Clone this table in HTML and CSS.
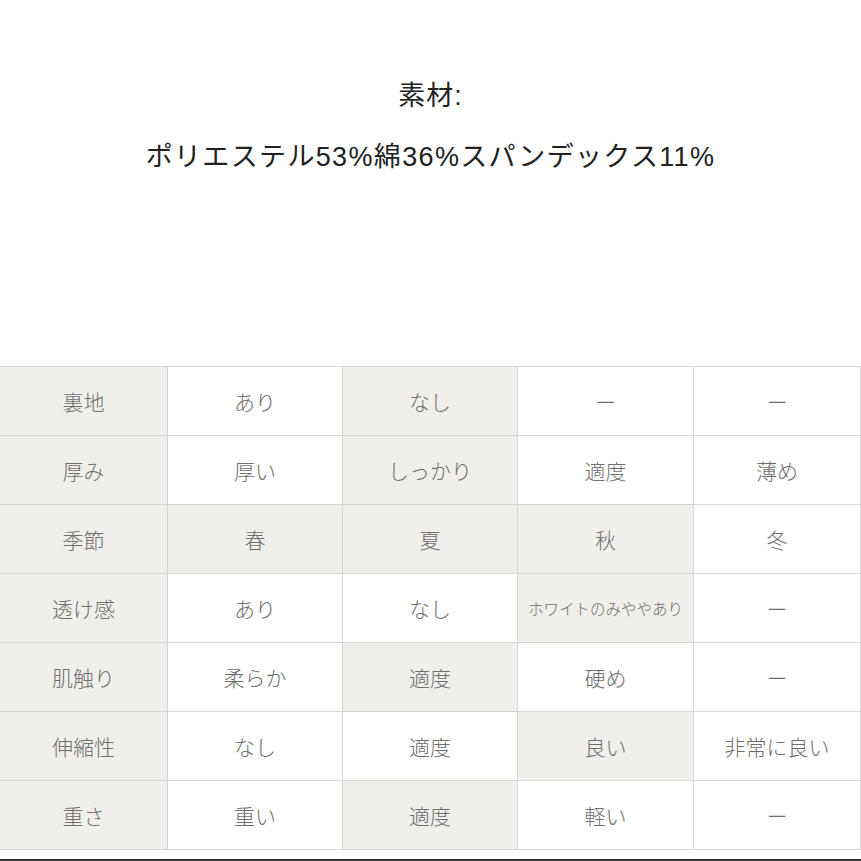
FILE: index.html
```html
<!DOCTYPE html>
<html lang="ja">
<head>
<meta charset="utf-8">
<link rel="stylesheet" href="styles.css">
</head>
<body>
<div class="page">
  <div class="header">
    <div class="t1">素材:</div>
    <div class="t2">ポリエステル53%綿36%スパンデックス11%</div>
  </div>
  <div class="table">
    <div class="c h">裏地</div><div class="c">あり</div><div class="c h">なし</div><div class="c">ー</div><div class="c">ー</div>
    <div class="c h">厚み</div><div class="c">厚い</div><div class="c h">しっかり</div><div class="c">適度</div><div class="c">薄め</div>
    <div class="c h">季節</div><div class="c h">春</div><div class="c h">夏</div><div class="c h">秋</div><div class="c">冬</div>
    <div class="c h">透け感</div><div class="c">あり</div><div class="c">なし</div><div class="c h small">ホワイトのみややあり</div><div class="c">ー</div>
    <div class="c h">肌触り</div><div class="c">柔らか</div><div class="c h">適度</div><div class="c">硬め</div><div class="c">ー</div>
    <div class="c h">伸縮性</div><div class="c">なし</div><div class="c">適度</div><div class="c h">良い</div><div class="c">非常に良い</div>
    <div class="c h">重さ</div><div class="c">重い</div><div class="c h">適度</div><div class="c">軽い</div><div class="c">ー</div>
  </div>
  <div class="spacer"></div>
  <div class="bottombar"></div>
</div>
</body>
</html>
```
FILE: styles.css
```css
html, body {
  margin: 0;
  padding: 0;
  background: #ffffff;
}
body {
  font-family: "Noto Sans CJK JP", "Noto Sans", sans-serif;
}
.page {
  width: 861px;
  height: 861px;
  display: flex;
  flex-direction: column;
  overflow: hidden;
}
.header {
  padding-top: 78px;
  text-align: center;
  color: #222;
  font-family: "Liberation Sans", "Noto Sans CJK JP", sans-serif;
}
.t1 {
  font-size: 27px;
  line-height: 36px;
  letter-spacing: 1px;
}
.t2 {
  margin-top: 25px;
  font-size: 27px;
  line-height: 36px;
  letter-spacing: 1.35px;
}
.table {
  margin-top: 191px;
  display: grid;
  grid-template-columns: 168px 175px 175px 176px 167px;
  grid-auto-rows: 69px;
  border-top: 1px solid #d9d7d3;
}
.c {
  display: flex;
  align-items: center;
  justify-content: center;
  border-right: 1px solid #d9d7d3;
  border-bottom: 1px solid #d9d7d3;
  background: #ffffff;
  color: #6e6e6e;
  font-size: 21px;
  font-weight: 300;
  box-sizing: border-box;
}
.c.h {
  background: #f0efec;
}
.c.small {
  font-size: 15.5px;
}
.spacer {
  flex: 1;
}
.bottombar {
  height: 2px;
  background: #333333;
}
```
